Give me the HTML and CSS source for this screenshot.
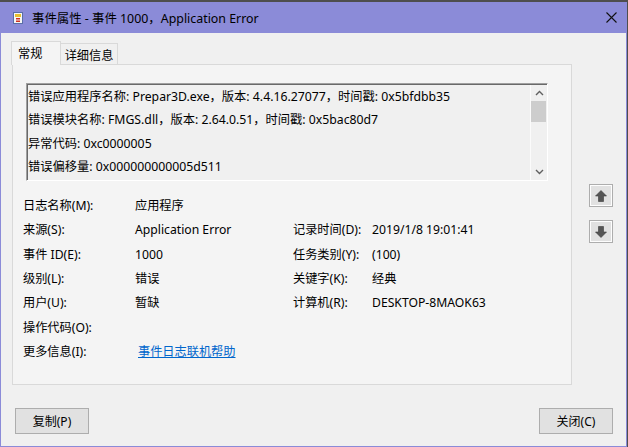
FILE: index.html
```html
<!DOCTYPE html>
<html lang="zh-CN">
<head>
<meta charset="utf-8">
<title>事件属性</title>
<link rel="stylesheet" href="styles.css">
</head>
<body>
<div class="screen">
  <div class="window">
    <div class="titlebar">
      <svg class="app-icon" width="10" height="12" viewBox="0 0 10 12">
        <rect x="0.5" y="0.5" width="9" height="11" fill="#f6f6f6" stroke="#5a6fa8"/>
        <rect x="2" y="2" width="6" height="3" fill="#e8c030"/>
        <rect x="3" y="6" width="4" height="1.5" fill="#d03020"/>
        <rect x="3" y="8.5" width="4" height="1.5" fill="#d03020"/>
      </svg>
      <span class="title">事件属性 - 事件 1000，Application Error</span>
      <svg class="close" width="11" height="11" viewBox="0 0 11 11">
        <path d="M0.5 0.5 L10.5 10.5 M10.5 0.5 L0.5 10.5" stroke="#111" stroke-width="1.1" fill="none"/>
      </svg>
    </div>
    <div class="body">
      <div class="main">
        <div class="tabs-area">
          <div class="tabbar">
            <div class="tab active">常规</div>
            <div class="tab">详细信息</div>
          </div>
          <div class="panel">
            <div class="textbox">
              <div class="text-lines">
                <div>错误应用程序名称: Prepar3D.exe，版本: 4.4.16.27077，时间戳: 0x5bfdbb35</div>
                <div>错误模块名称: FMGS.dll，版本: 2.64.0.51，时间戳: 0x5bac80d7</div>
                <div>异常代码: 0xc0000005</div>
                <div>错误偏移量: 0x000000000005d511</div>
              </div>
              <div class="scrollbar">
                <div class="sb-btn">
                  <svg width="9" height="6" viewBox="0 0 9 6"><path d="M1 5 L4.5 1.5 L8 5" stroke="#606060" stroke-width="1.4" fill="none"/></svg>
                </div>
                <div class="thumb"></div>
                <div class="track"></div>
                <div class="sb-btn">
                  <svg width="9" height="6" viewBox="0 0 9 6"><path d="M1 1 L4.5 4.5 L8 1" stroke="#606060" stroke-width="1.4" fill="none"/></svg>
                </div>
              </div>
            </div>
            <div class="fields">
              <div>日志名称(M):</div><div>应用程序</div><div></div><div></div>
              <div>来源(S):</div><div>Application Error</div><div>记录时间(D):</div><div>2019/1/8 19:01:41</div>
              <div>事件 ID(E):</div><div>1000</div><div>任务类别(Y):</div><div>(100)</div>
              <div>级别(L):</div><div>错误</div><div>关键字(K):</div><div>经典</div>
              <div>用户(U):</div><div>暂缺</div><div>计算机(R):</div><div>DESKTOP-8MAOK63</div>
              <div>操作代码(O):</div><div></div><div></div><div></div>
              <div>更多信息(I):</div><div><a class="link" href="#">事件日志联机帮助</a></div><div></div><div></div>
            </div>
          </div>
        </div>
        <div class="side">
          <button class="nav">
            <svg width="12" height="12" viewBox="0 0 12 12"><path d="M6 0.5 L11.5 6 L8.5 6 L8.5 11.5 L3.5 11.5 L3.5 6 L0.5 6 Z" fill="#555" stroke="#3c3c3c" stroke-width="0.6" stroke-linejoin="round"/></svg>
          </button>
          <button class="nav">
            <svg width="12" height="12" viewBox="0 0 12 12"><path d="M6 11.5 L11.5 6 L8.5 6 L8.5 0.5 L3.5 0.5 L3.5 6 L0.5 6 Z" fill="#555" stroke="#3c3c3c" stroke-width="0.6" stroke-linejoin="round"/></svg>
          </button>
        </div>
      </div>
      <div class="actions">
        <button class="btn copy">复制(P)</button>
        <button class="btn">关闭(C)</button>
      </div>
    </div>
  </div>
</div>
</body>
</html>
```

FILE: styles.css
```css
* { box-sizing: border-box; }
html, body { margin: 0; padding: 0; }
body {
  width: 628px;
  height: 447px;
  overflow: hidden;
  font-family: "Noto Sans", "Noto Sans CJK SC", sans-serif;
  font-size: 12.2px;
  color: #000;
}
.screen {
  width: 628px;
  height: 447px;
  background: #4e4e4e;
  padding-top: 2px;
}
.window {
  width: 627px;
  height: 445px;
  border: 1px solid #8b8bd8;
  border-top: none;
  background: #f0f0f0;
  display: flex;
  flex-direction: column;
}
.titlebar {
  height: 31px;
  background: #8b8bd8;
  display: flex;
  align-items: center;
  padding: 0 9px 0 12px;
}
.app-icon { flex: none; margin-top: 1px; }
.title {
  margin-left: 9px;
  font-size: 12.4px;
  color: #000;
  flex: 1;
  white-space: nowrap;
}
.close { flex: none; }
.body {
  flex: 1;
  padding: 8px 13px 12px 11px;
  display: flex;
  flex-direction: column;
}
.main { display: flex; }
.tabs-area { width: 560px; }
.tabbar {
  height: 23px;
  display: flex;
  align-items: flex-end;
  margin-left: -1px;
  position: relative;
  z-index: 1;
}
.tab {
  height: 21px;
  width: 57px;
  border: 1px solid #d9d9d9;
  border-bottom: none;
  border-left: none;
  background: #f0f0f0;
  display: flex;
  align-items: center;
  justify-content: center;
  padding-top: 1px;
}
.tab.active {
  width: 50px;
  height: 24px;
  margin-bottom: -1px;
  border-left: 1px solid #d9d9d9;
  background: #f4f4f4;
  justify-content: flex-start;
  padding-left: 6px;
  padding-top: 0;
  padding-bottom: 2px;
}
.panel {
  height: 321px;
  border: 1px solid #d9d9d9;
  background: #f4f4f4;
  padding: 18px 22px 0 10px;
}
.textbox {
  margin-left: 3px;
  width: 522px;
  height: 98px;
  border: 1px solid;
  border-color: #a0a0a0 #ffffff #ffffff #a0a0a0;
  box-shadow: inset 1px 1px 0 #696969;
  background: #f0f0f0;
  display: flex;
}
.text-lines {
  flex: 1;
  padding: 1px 0 0 1px;
  line-height: 23.3px;
  font-size: 12.25px;
  white-space: nowrap;
  overflow: hidden;
}
.scrollbar {
  width: 17px;
  margin-top: 1px;
  display: flex;
  flex-direction: column;
  background: #f0f0f0;
  border-left: 1px solid #fbfbfb;
}
.sb-btn {
  height: 16px;
  display: flex;
  align-items: center;
  justify-content: center;
}
.thumb {
  height: 21px;
  margin: 0 1px 0 0;
  background: #cdcdcd;
}
.track { flex: 1; }
.fields {
  margin-top: 13px;
  display: grid;
  grid-template-columns: 112px 158px 79px 1fr;
  grid-auto-rows: 24.33px;
  line-height: 24.33px;
  white-space: nowrap;
}
.link {
  margin-left: 3px;
  color: #0066cc;
  text-decoration: underline;
}
.side {
  margin-left: auto;
  padding-top: 143px;
  display: flex;
  flex-direction: column;
  gap: 13px;
}
.nav {
  width: 24px;
  height: 23px;
  padding: 0;
  margin: 0;
  border: 1px solid #adadad;
  box-shadow: inset 0 0 0 1px #fdfdfd;
  background: #e1e1e1;
  display: flex;
  align-items: center;
  justify-content: center;
}
.actions {
  margin-top: 23px;
  display: flex;
  justify-content: space-between;
}
.btn {
  width: 74px;
  height: 26px;
  padding: 0;
  margin: 0;
  border: 1px solid #adadad;
  background: #e1e1e1;
  font-family: "Noto Sans", "Noto Sans CJK SC", sans-serif;
  font-size: 12px;
  color: #000;
}
.btn.copy { margin-left: 3px; }
```
